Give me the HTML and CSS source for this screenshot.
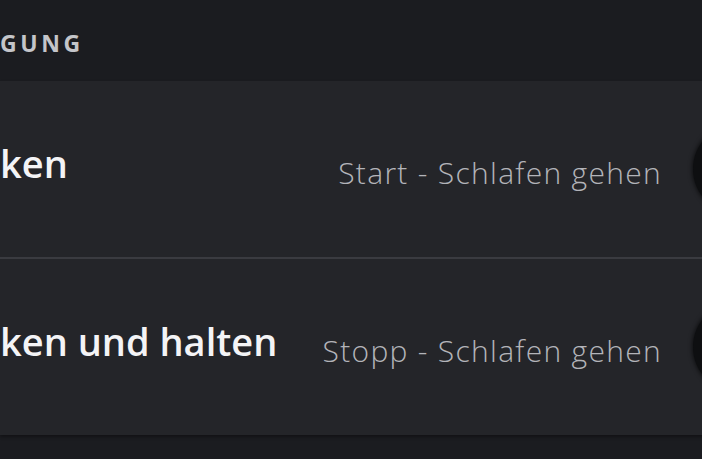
FILE: index.html
```html
<!DOCTYPE html>
<html lang="de">
<head>
<meta charset="utf-8">
<link rel="stylesheet" href="styles.css">
</head>
<body>
<div class="page">
  <div class="section-head">GUNG</div>
  <div class="card">
    <div class="row">
      <div class="title">ken</div>
      <div class="value">Start - Schlafen gehen</div>
      <div class="knob"></div>
    </div>
    <div class="divider"></div>
    <div class="row">
      <div class="title">ken und halten</div>
      <div class="value">Stopp - Schlafen gehen</div>
      <div class="knob"></div>
    </div>
  </div>
</div>
</body>
</html>
```
FILE: styles.css
```css
html, body {
  margin: 0;
  padding: 0;
  background: #1a1b1f;
}
.page {
  width: 702px;
  height: 459px;
  overflow: hidden;
  font-family: "Open Sans", "Noto Sans", sans-serif;
  background: #1b1c20;
}
.section-head {
  height: 81px;
  box-sizing: border-box;
  padding-top: 27px;
  font-size: 23px;
  line-height: 32px;
  font-weight: 700;
  letter-spacing: 3.6px;
  color: #c4c5c9;
}
.card {
  background: #242529;
  margin-right: -81px;
  box-shadow: 0 2px 3px rgba(0,0,0,0.35);
}
.row {
  height: 176px;
  display: flex;
  align-items: center;
}
.title {
  flex: 1;
  font-size: 38px;
  font-weight: 600;
  color: #f4f4f6;
  line-height: 50px;
  margin-top: -12px;
}
.value {
  font-size: 30px;
  font-weight: 300;
  color: #b3b4b9;
  letter-spacing: 1.3px;
  line-height: 40px;
  margin-top: 7px;
  margin-right: 31px;
}
.knob {
  flex-shrink: 0;
  width: 90px;
  height: 90px;
  border-radius: 50%;
  background: #0e0f11;
  box-shadow: 0 0 4px 1px rgba(0,0,0,0.6);
}
.divider {
  height: 2px;
  background: #3a3b40;
}
```
